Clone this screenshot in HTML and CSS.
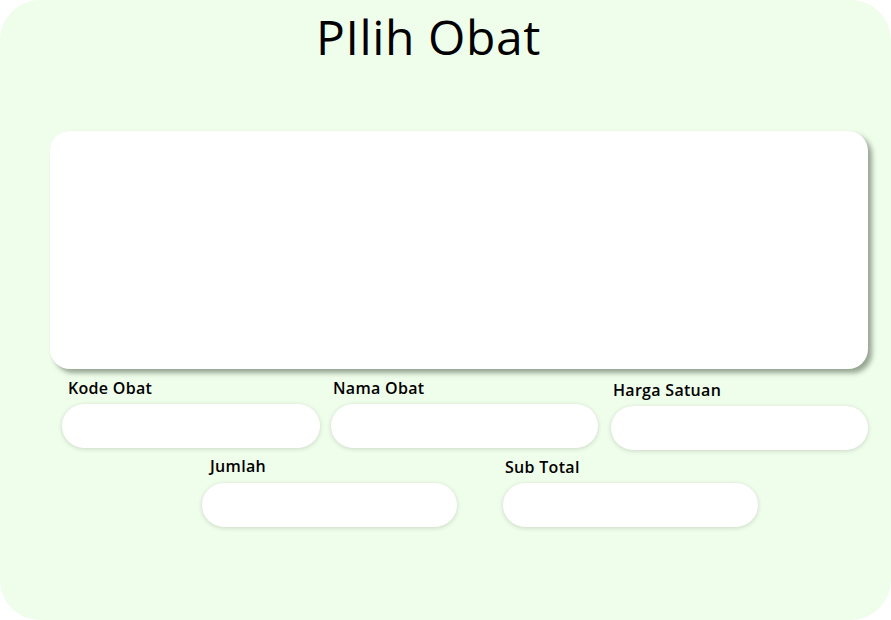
FILE: index.html
```html
<!DOCTYPE html>
<html>
<head>
<meta charset="utf-8">
<link rel="stylesheet" href="styles.css">
</head>
<body>
<div class="panel">
  <h1 class="title">PIlih Obat</h1>
  <div class="list-box"></div>
  <div class="row row-one">
    <div class="field f-kode">
      <label class="label">Kode Obat</label>
      <div class="input"></div>
    </div>
    <div class="field f-nama">
      <label class="label">Nama Obat</label>
      <div class="input"></div>
    </div>
    <div class="field f-harga">
      <label class="label">Harga Satuan</label>
      <div class="input"></div>
    </div>
  </div>
  <div class="row row-two">
    <div class="field f-jumlah">
      <label class="label">Jumlah</label>
      <div class="input"></div>
    </div>
    <div class="field f-sub">
      <label class="label">Sub Total</label>
      <div class="input"></div>
    </div>
  </div>
</div>
</body>
</html>
```

FILE: styles.css
```css
html, body {
  margin: 0;
  padding: 0;
  background: #ffffff;
}
body {
  font-family: "Open Sans", "Noto Sans", sans-serif;
  color: #000;
}
.panel {
  width: 891px;
  height: 620px;
  box-sizing: border-box;
  background: #effdeb;
  border-radius: 40px;
  display: flex;
  flex-direction: column;
  overflow: hidden;
}
.title {
  margin: 6px 0 0 316px;
  font-size: 48px;
  font-weight: 400;
  line-height: 62px;
  letter-spacing: 0.6px;
}
.list-box {
  margin: 63px 0 0 50px;
  width: 818px;
  height: 238px;
  background: #fff;
  border-radius: 20px;
  box-shadow: 4px 4px 5px rgba(40, 60, 40, 0.45);
}
.row {
  display: flex;
  align-items: flex-start;
}
.row-one {
  margin-top: 9px;
  padding-left: 62px;
}
.row-two {
  margin-top: 7px;
  padding-left: 202px;
  gap: 46px;
}
.field {
  display: flex;
  flex-direction: column;
}
.label {
  font-size: 16px;
  font-weight: 600;
  line-height: 20px;
  letter-spacing: 0.3px;
  margin-bottom: 6px;
}
.input {
  height: 44px;
  background: #fff;
  border-radius: 22px;
  box-shadow: 0 1px 4px rgba(60, 90, 60, 0.22);
}
.f-kode { width: 258px; margin-top: 1px; }
.f-kode .label { padding-left: 6px; margin-top: -1px; }
.f-nama { width: 267px; margin-left: 11px; }
.f-nama .label { padding-left: 2px; }
.f-harga { width: 257px; margin-left: 13px; margin-top: 2px; }
.f-harga .label { padding-left: 2px; }
.f-jumlah, .f-sub { width: 255px; }
.f-jumlah .label { padding-left: 8px; margin-top: -1px; margin-bottom: 7px; }
.f-sub .label { padding-left: 2px; }
```
